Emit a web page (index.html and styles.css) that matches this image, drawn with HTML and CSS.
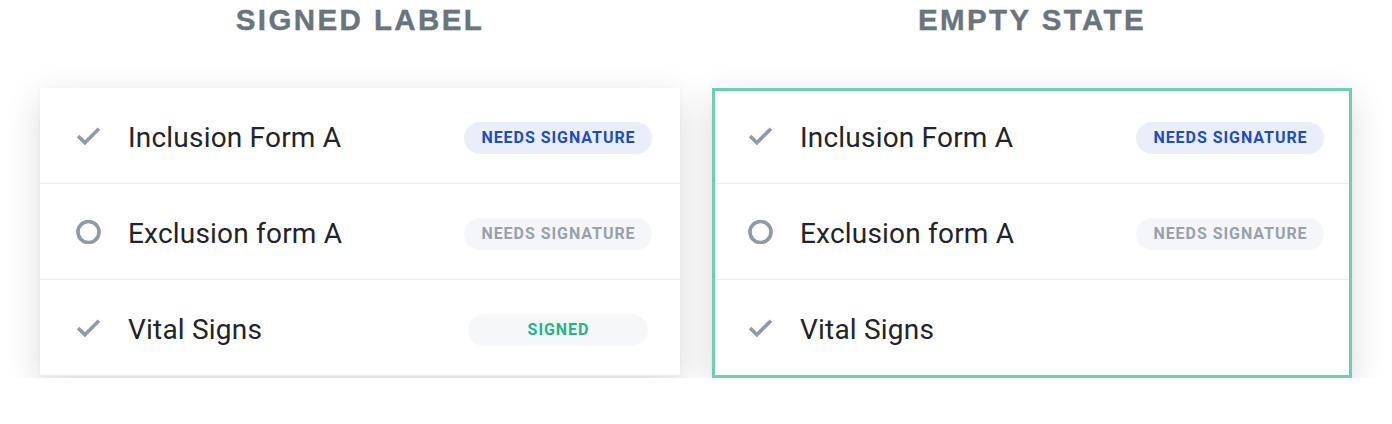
FILE: index.html
```html
<!DOCTYPE html>
<html>
<head>
<meta charset="utf-8">
<link rel="stylesheet" href="styles.css">
</head>
<body>
<div class="page">
  <section class="col">
    <h2 class="heading">SIGNED LABEL</h2>
    <div class="card">
      <div class="row">
        <svg class="icon" viewBox="0 0 24 24"><path d="M2 12.5l6.5 6.5L22 5.5" /></svg>
        <span class="title">Inclusion Form A</span>
        <span class="slot"><span class="badge badge-active">NEEDS SIGNATURE</span></span>
      </div>
      <div class="row">
        <svg class="icon" viewBox="0 0 24 24"><circle cx="12" cy="12.5" r="10.1" /></svg>
        <span class="title">Exclusion form A</span>
        <span class="slot"><span class="badge badge-muted">NEEDS SIGNATURE</span></span>
      </div>
      <div class="row">
        <svg class="icon" viewBox="0 0 24 24"><path d="M2 12.5l6.5 6.5L22 5.5" /></svg>
        <span class="title">Vital Signs</span>
        <span class="slot"><span class="badge badge-signed">SIGNED</span></span>
      </div>
    </div>
  </section>
  <section class="col">
    <h2 class="heading">EMPTY STATE</h2>
    <div class="card card-focus">
      <div class="row">
        <svg class="icon" viewBox="0 0 24 24"><path d="M2 12.5l6.5 6.5L22 5.5" /></svg>
        <span class="title">Inclusion Form A</span>
        <span class="slot"><span class="badge badge-active">NEEDS SIGNATURE</span></span>
      </div>
      <div class="row">
        <svg class="icon" viewBox="0 0 24 24"><circle cx="12" cy="12.5" r="10.1" /></svg>
        <span class="title">Exclusion form A</span>
        <span class="slot"><span class="badge badge-muted">NEEDS SIGNATURE</span></span>
      </div>
      <div class="row row-last">
        <svg class="icon" viewBox="0 0 24 24"><path d="M2 12.5l6.5 6.5L22 5.5" /></svg>
        <span class="title">Vital Signs</span>
        <span class="slot"></span>
      </div>
    </div>
  </section>
</div>
</body>
</html>
```

FILE: styles.css
```css
* { box-sizing: border-box; }
html, body { margin: 0; padding: 0; background: #ffffff; }
body { font-family: Roboto, "Liberation Sans", sans-serif; }

.page {
  display: flex;
  gap: 32px;
  padding: 0 40px;
}

.col {
  width: 640px;
  display: flex;
  flex-direction: column;
}

.heading {
  margin: 0;
  height: 88px;
  padding-top: 3px;
  text-align: center;
  font-family: "Liberation Sans", Arial, sans-serif;
  font-weight: 700;
  font-size: 29.5px;
  line-height: 34px;
  letter-spacing: 2.4px;
  color: #69747c;
  -webkit-text-stroke: 0.4px #69747c;
}

.card {
  background: #fff;
  box-shadow: 0 10px 34px rgba(0, 0, 0, 0.14), 0 1px 4px rgba(0, 0, 0, 0.04);
}

.card-focus {
  outline: 3px solid #6ccfb4;
  outline-offset: -3px;
  padding-bottom: 2px;
}

.row {
  display: flex;
  align-items: center;
  height: 96px;
  padding: 0 28px 0 36px;
  border-bottom: 1px solid #e9eaee;
}

.row-last { border-bottom-color: transparent; }

.icon {
  width: 25px;
  height: 25px;
  flex: none;
  fill: none;
  stroke: #8f99a7;
  stroke-width: 3.5;
  margin-right: 27px;
}

.title {
  flex: 1;
  font-size: 28px;
  letter-spacing: 0.2px;
  color: #212429;
  padding-top: 3px;
}

.slot {
  width: 188px;
  display: flex;
  justify-content: center;
}

.badge {
  height: 32px;
  border-radius: 16px;
  display: flex;
  align-items: center;
  justify-content: center;
  font-weight: 700;
  font-size: 16px;
  letter-spacing: 0.95px;
  padding: 0 0 0 1px;
  width: 188px;
  margin-top: 4px;
}

.badge-active { background: #e9eef9; color: #1d4dc2; }
.badge-muted { background: #f4f6f9; color: #97a1ae; }
.badge-signed { background: #f5f7f9; color: #23b487; width: 180px; }
```
